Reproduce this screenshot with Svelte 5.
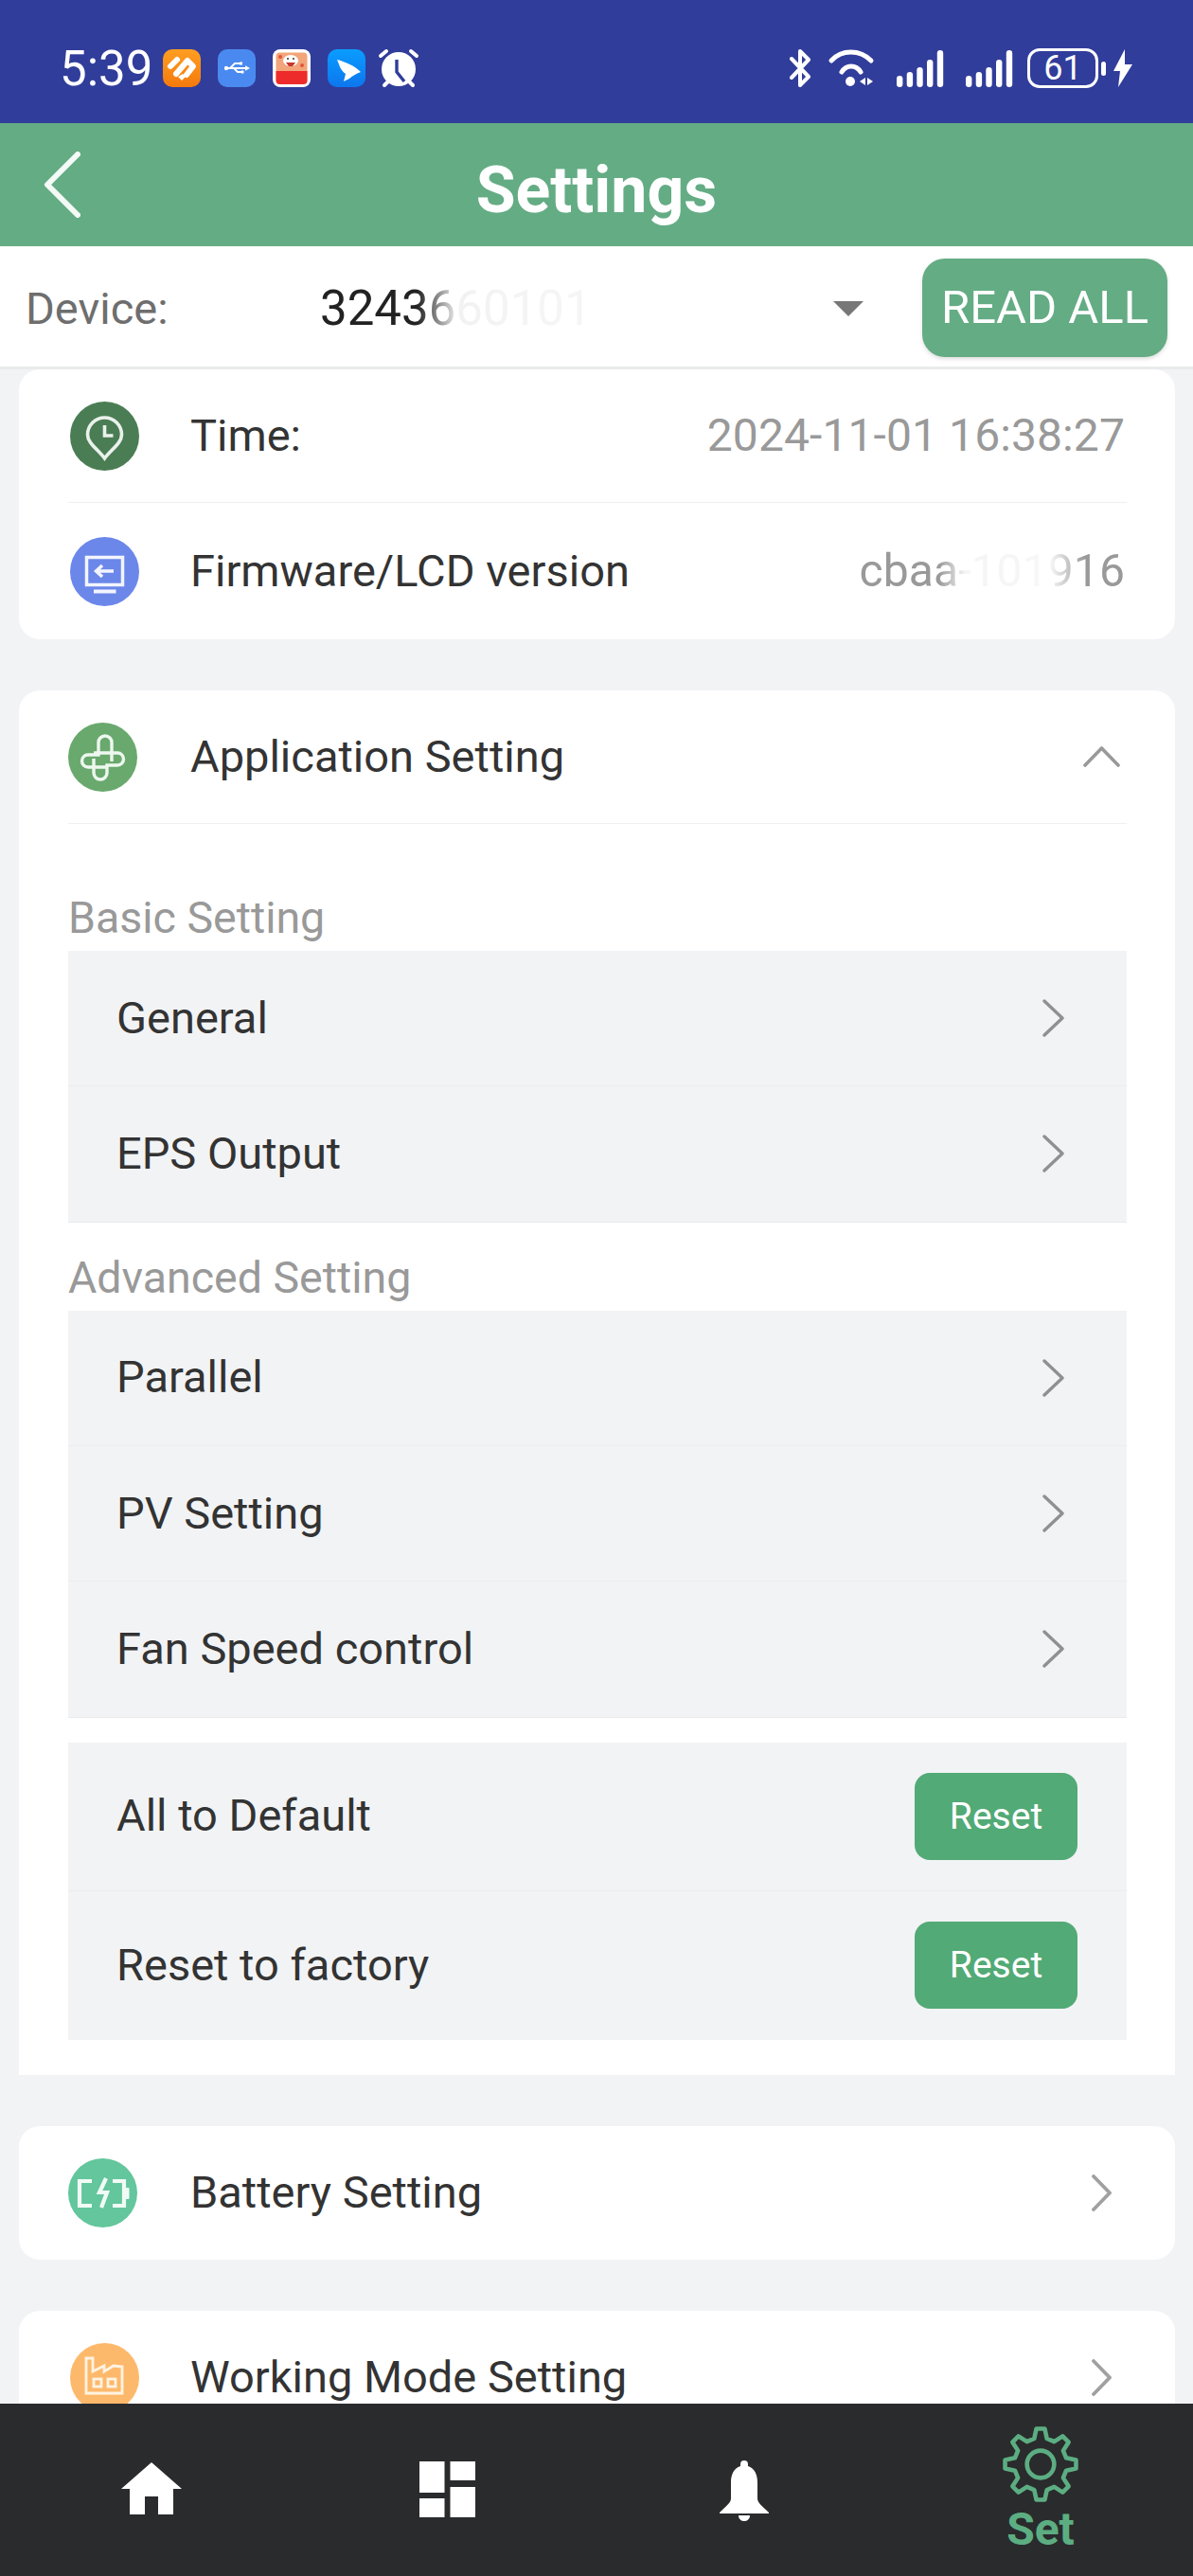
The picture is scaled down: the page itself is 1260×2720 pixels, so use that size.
<script>
  const gearPoints = (() => {
    const cx = 50, cy = 50, teeth = 8, ro = 46, ri = 34;
    const pts = [];
    for (let i = 0; i < teeth; i++) {
      const a = (i / teeth) * Math.PI * 2 - Math.PI / 2;
      const s = Math.PI / teeth;
      const p = (r, t) => `${(cx + r * Math.cos(t)).toFixed(2)},${(cy + r * Math.sin(t)).toFixed(2)}`;
      pts.push(p(ri, a - s * 0.62), p(ro, a - s * 0.3), p(ro, a + s * 0.3), p(ri, a + s * 0.62));
    }
    return pts.join(' ');
  })();
  const basic = ['General', 'EPS Output'];
  const advanced = ['Parallel', 'PV Setting', 'Fan Speed control'];
  const resets = ['All to Default', 'Reset to factory'];
  const bars = [[0, 12], [10.700, 16], [21.300, 21], [32, 29], [42.800, 39]];
</script>

<div class="app">
  <div class="status">
    <span class="clock">5:39</span>
    <div class="notifs">
      <svg class="n" viewBox="0 0 40 40"><defs><linearGradient id="o" x1="0" y1="0" x2="0" y2="1"><stop offset="0" stop-color="#ff9e22"/><stop offset="1" stop-color="#f47a0c"/></linearGradient></defs><rect width="40" height="40" rx="10" fill="url(#o)"/><g fill="none" stroke="#fff" stroke-width="6" stroke-linejoin="round" stroke-linecap="round"><path d="M8 18 15 11"/><path d="M14 26 26 12 32 18 25 27"/></g><path d="M16 29l4 4 4-4-3-3z" fill="#fff"/></svg>
      <svg class="n" viewBox="0 0 40 40"><rect width="40" height="40" rx="10" fill="#4a8af0"/><path d="M9 20h22M13 20l5-5h5M17 20l4 4h4" fill="none" stroke="#fff" stroke-width="1.800"/><circle cx="9" cy="20" r="2.200" fill="#fff"/><path d="M34 20l-5-2.800v5.600z" fill="#fff"/><rect x="23" y="13.500" width="3" height="3" fill="#fff"/><circle cx="26" cy="24" r="1.700" fill="#fff"/></svg>
      <svg class="n" viewBox="0 0 40 40"><rect width="40" height="40" rx="8" fill="#fff"/><rect x="3.500" y="3.500" width="33" height="33" rx="4" fill="#f2a57a"/><path d="M3.500 23h33v10a4 4 0 0 1-4 4h-25a4 4 0 0 1-4-4z" fill="#ee2b2b"/><ellipse cx="19" cy="12" rx="8" ry="6" fill="#fff"/><path d="M14 14h10l-3 4h-4z" fill="#c9362c"/><circle cx="16" cy="10" r="1" fill="#333"/><circle cx="22" cy="10" r="1" fill="#333"/><circle cx="8" cy="8" r="2" fill="#e0553a"/><circle cx="31" cy="17" r="2" fill="#e0553a"/></svg>
      <svg class="n" viewBox="0 0 40 40"><defs><linearGradient id="b" x1="0" y1="0" x2="0" y2="1"><stop offset="0" stop-color="#0a9dff"/><stop offset="1" stop-color="#0d76ee"/></linearGradient></defs><rect width="40" height="40" rx="10" fill="url(#b)"/><path d="M10 11C18 13 28 17 35 24 30 26 26 28 23 31L17 34 19 26C16 24 13 20 12 16z" fill="#fff"/></svg>
      <svg class="alarm" viewBox="0 0 42 40"><circle cx="21" cy="21" r="18" fill="#fff"/><path d="M19 11v13l8 10" fill="none" stroke="#313d9b" stroke-width="3.400"/><path d="M2 7 8 2M40 7 34 2" stroke="#fff" stroke-width="4" stroke-linecap="round"/><path d="M6 38l4-4M36 38l-4-4" stroke="#fff" stroke-width="4" stroke-linecap="round"/></svg>
    </div>
    <div class="sys">
      <svg class="bt" viewBox="0 0 25 40"><path d="M3 10 21 29 12 38V2L21 11 3 30" fill="none" stroke="#fff" stroke-width="4" stroke-linejoin="round" stroke-linecap="round"/></svg>
      <svg class="wifi" viewBox="0 0 51 40"><path d="M5 12C16 0 35 0 47 12" fill="none" stroke="#fff" stroke-width="5" stroke-linecap="round"/><path d="M16 24C21 16 31 16 36 24" fill="none" stroke="#fff" stroke-width="5" stroke-linecap="round"/><circle cx="25" cy="34" r="5" fill="#fff"/><path d="M41 30v8l-6-4zM43 30v8l6-4z" fill="#fff"/></svg>
      <svg class="sig" viewBox="0 0 50 40">{#each bars as [x, h]}<rect {x} y={40 - h} width="6.400" height={h} rx="3.200" fill="#fff"/>{/each}</svg>
      <svg class="sig s2" viewBox="0 0 50 40">{#each bars as [x, h]}<rect {x} y={40 - h} width="6.400" height={h} rx="3.200" fill="#fff"/>{/each}</svg>
      <div class="batt"><span>61</span></div>
      <span class="nub"></span>
      <svg class="bolt" viewBox="0 0 20 40"><path d="M12 0 0 23h7L5 40 20 16h-8z" fill="#fff"/></svg>
    </div>
  </div>

  <header class="top">
    <svg class="back" viewBox="0 0 39 70"><path d="M36 3 4 35l32 32" fill="none" stroke="#f4faf6" stroke-width="6" stroke-linecap="round" stroke-linejoin="round"/></svg>
    <h1>Settings</h1>
  </header>

  <div class="device">
    <span class="dlabel">Device:</span>
    <span class="dvalue">3243660101</span>
    <span class="tri"></span>
    <button class="readall">READ ALL</button>
  </div>

  <main class="content">
    <section class="card">
      <div class="row r1 line">
        <svg class="ico off" viewBox="0 0 73 73"><circle cx="36.500" cy="36.500" r="36.500" fill="#4b7d55"/><path d="M36.500 60 C30 51 18.500 44 18.500 35a18 18 0 0 1 36 0C54.500 44 43 51 36.500 60z" fill="none" stroke="#eaf2ec" stroke-width="3.600"/><path d="M36.500 25v11h9" fill="none" stroke="#eaf2ec" stroke-width="3.600"/></svg>
        <span class="name">Time:</span>
        <span class="val">2024-11-01 16:38:27</span>
      </div>
      <div class="row r2">
        <svg class="ico off" viewBox="0 0 73 73"><circle cx="36.500" cy="36.500" r="36.500" fill="#6c87ea"/><rect x="17.500" y="21.500" width="38" height="29" fill="none" stroke="#f2f5ff" stroke-width="3.500"/><path d="M25 55.500h23.500v4H25z" fill="#f2f5ff"/><path d="M46 36H28M34 30l-6.500 6 6.500 6" fill="none" stroke="#f2f5ff" stroke-width="3.500"/></svg>
        <span class="name">Firmware/LCD version</span>
        <span class="val fw">cbaa-101916</span>
      </div>
    </section>

    <section class="card app-card">
      <div class="row r1 line">
        <svg class="ico" viewBox="0 0 73 73"><circle cx="36.500" cy="36.500" r="36.500" fill="#69a96e"/><g fill="none" stroke="#eef7ef" stroke-width="3.400"><path d="M46 41V21a7 7 0 0 0-14 0v13H21a6.500 6.500 0 0 0 0 13h20"/><path d="M27 32h25a6.500 6.500 0 0 1 0 13H41v8a7 7 0 0 1-14 0V38"/></g></svg>
        <span class="name">Application Setting</span>
        <svg class="up" viewBox="0 0 39 22"><path d="M2 20 19.500 2 37 20" fill="none" stroke="#999" stroke-width="3.600" stroke-linecap="round" stroke-linejoin="round"/></svg>
      </div>

      <div class="label first">Basic Setting</div>
      <div class="panel">
        {#each basic as b}
          <div class="item"><span>{b}</span><svg class="chev" viewBox="0 0 25 40"><path d="M3 2 22 20 3 38" fill="none" stroke="#8f9090" stroke-width="3.400" stroke-linecap="round" stroke-linejoin="round"/></svg></div>
        {/each}
      </div>

      <div class="label">Advanced Setting</div>
      <div class="panel">
        {#each advanced as b}
          <div class="item"><span>{b}</span><svg class="chev" viewBox="0 0 25 40"><path d="M3 2 22 20 3 38" fill="none" stroke="#8f9090" stroke-width="3.400" stroke-linecap="round" stroke-linejoin="round"/></svg></div>
        {/each}
      </div>

      <div class="panel resets">
        {#each resets as r}
          <div class="item reset"><span>{r}</span><button class="rbtn">Reset</button></div>
        {/each}
      </div>
    </section>

    <section class="card">
      <div class="row r1">
        <svg class="ico" viewBox="0 0 73 73"><circle cx="36.500" cy="36.500" r="36.500" fill="#63c69c"/><g fill="none" stroke="#f1fbf6" stroke-width="4.200"><path d="M25 24H12v26h13"/><path d="M47 24h12v26H47"/><path d="M40 21l-7 15h8l-6 16"/></g><rect x="60" y="31" width="4.500" height="12" rx="1" fill="#f1fbf6"/></svg>
        <span class="name">Battery Setting</span>
        <svg class="right" viewBox="0 0 21 39"><path d="M2 2 19 19.500 2 37" fill="none" stroke="#a0a0a0" stroke-width="3.800" stroke-linecap="round" stroke-linejoin="round"/></svg>
      </div>
    </section>

    <section class="card">
      <div class="row r1">
        <svg class="ico off" viewBox="0 0 73 73"><circle cx="36.500" cy="36.500" r="36.500" fill="#fdb96b"/><g fill="none" stroke="#fff3e2" stroke-width="2.800"><path d="M17 16h7v14l12-6v6l10-6 9 1v28H17z"/><rect x="25" y="38" width="8" height="8"/><rect x="40" y="38" width="8" height="8"/></g></svg>
        <span class="name">Working Mode Setting</span>
        <svg class="right" viewBox="0 0 21 39"><path d="M2 2 19 19.500 2 37" fill="none" stroke="#a0a0a0" stroke-width="3.800" stroke-linecap="round" stroke-linejoin="round"/></svg>
      </div>
    </section>
  </main>

  <nav class="tabs">
    <div class="tab t1"><svg viewBox="0 0 64 55" width="64" height="55"><path d="M32 0 64 28H55V55H39V36H25V55H9V28H0z" fill="#fff"/></svg></div>
    <div class="tab t2"><svg viewBox="0 0 59 59" width="59" height="59"><path d="M0 0h26.500v33H0zM32.500 0H59v20H32.500zM0 39h26.500v20H0zM32.500 27H59v32H32.500z" fill="#fff"/></svg></div>
    <div class="tab t3"><svg viewBox="0 0 52 64" width="52" height="64"><path d="M26 0a4 4 0 0 1 4 4v2c7 2 10 9 10 17v17c0 5 5 8 12 15v1H0v-1c7-7 12-10 12-15V23c0-8 3-15 10-17V4a4 4 0 0 1 4-4z" fill="#fff"/><path d="M20 58h12c0 8-12 8-12 0z" fill="#fff"/></svg></div>
    <div class="tab t4">
      <svg viewBox="0 0 100 100" width="82" height="82"><polygon points={gearPoints} fill="none" stroke="#5cae82" stroke-width="5.600" stroke-linejoin="round"/><circle cx="50" cy="50" r="17.500" fill="none" stroke="#5cae82" stroke-width="5.600"/></svg>
      <span>Set</span>
    </div>
  </nav>
</div>

<style>
  :global(body) { margin: 0; background: #f2f3f5; }
  .app {
    width: 1260px; height: 2720px; overflow: hidden; display: flex; flex-direction: column;
    font-family: Roboto, "Noto Sans", sans-serif; background: #f2f3f5; color: #333;
  }
  .status {
    height: 130px; flex: none; background: #313d9b; color: #fff; display: flex; align-items: flex-start;
    padding: 52px 64px 0 63px; box-sizing: border-box;
  }
  .clock { font-size: 51px; line-height: 42px; width: 109px; }
  .notifs { display: flex; gap: 18px; }
  .n { width: 40px; height: 40px; display: block; }
  .alarm { width: 42px; height: 40px; display: block; margin-left: -4px; overflow: visible; }
  .sys { margin-left: auto; display: flex; align-items: flex-start; }
  .bt { width: 25px; height: 40px; display: block; margin-right: 15px; }
  .wifi { width: 51px; height: 40px; display: block; margin-right: 23px; }
  .sig { width: 50px; height: 40px; display: block; margin-right: 23px; }
  .sig.s2 { margin-right: 15px; }
  .batt {
    width: 75px; height: 42px; box-sizing: border-box; border: 3px solid #fff; border-radius: 13px; margin-top: -1px;
    display: flex; align-items: center; justify-content: center; font-size: 36px; line-height: 1;
  }
  .nub { width: 5px; height: 15px; background: #fff; border-radius: 3px; margin: 13px 8px 0 3px; }
  .bolt { width: 20px; height: 40px; display: block; }

  .top {
    height: 130px; flex: none; background: #64ac84; position: relative; display: flex; align-items: center; justify-content: center;
    padding-top: 11px; box-sizing: border-box;
  }
  .top h1 { margin: 0; font-size: 68px; font-weight: 700; color: #fff; line-height: 1; }
  .back { position: absolute; left: 46px; top: 30px; width: 39px; height: 70px; }

  .device {
    height: 127px; flex: none; background: #fff; display: flex; align-items: center;
    border-bottom: 3px solid #e9eaeb; padding: 0 27px 0 27px; position: relative;
  }
  .dlabel { width: 311px; font-size: 47px; color: #6e6e6e; position: relative; top: 2px; }
  .dvalue {
    font-size: 51px; color: #222; width: 539px; position: relative; top: 2px;
    -webkit-mask-image: linear-gradient(to right, #000 0, #000 19%, rgba(0,0,0,.06) 27%, rgba(0,0,0,.04) 54%, rgba(0,0,0,0) 58%);
    mask-image: linear-gradient(to right, #000 0, #000 19%, rgba(0,0,0,.06) 27%, rgba(0,0,0,.04) 54%, rgba(0,0,0,0) 58%);
  }
  .tri {
    width: 0; height: 0; border-left: 16px solid transparent; border-right: 16px solid transparent; border-top: 16px solid #777;
    position: absolute; left: 880px; top: 58px;
  }
  .readall {
    width: 259px; height: 104px; margin-left: auto; margin-top: 2px; border: 0; border-radius: 24px; background: #64ac84; color: #fff;
    font: 400 49px Roboto, sans-serif; padding: 0; box-shadow: 0 2px 4px rgba(0,0,0,.14);
  }

  .content { flex: 1; min-height: 0; overflow: hidden; padding: 0 19px 0 20px; display: flex; flex-direction: column; gap: 54px; }
  .card { background: #fff; border-radius: 22px; padding: 0 51px 0 52px; flex: none; }
  .app-card { border-radius: 22px 22px 0 0; padding-bottom: 37px; }
  .row { display: flex; align-items: center; box-sizing: border-box; }
  .r1 { height: 141px; }
  .r2 { height: 144px; }
  .line { border-bottom: 1.5px solid #eeeff0; }
  .ico { width: 73px; height: 73px; flex: none; display: block; }
  .ico.off { margin-left: 2px; margin-right: -2px; }
  .name { margin-left: 56px; font-size: 47px; color: #333; position: relative; top: -1px; }
  .val { margin-left: auto; margin-right: 2px; font-size: 48px; letter-spacing: 0.1px; color: #999; position: relative; top: -1px; }
  .fw {
    -webkit-mask-image: linear-gradient(to right, #000 0, #000 30%, rgba(0,0,0,.1) 40%, rgba(0,0,0,.08) 72%, #000 85%);
    mask-image: linear-gradient(to right, #000 0, #000 30%, rgba(0,0,0,.1) 40%, rgba(0,0,0,.08) 72%, #000 85%);
  }
  .up { width: 39px; height: 22px; margin-left: auto; margin-right: 7px; display: block; }
  .right { width: 21px; height: 39px; margin-left: auto; margin-right: 16px; display: block; }

  .label { height: 70px; line-height: 70px; padding-top: 23px; font-size: 46.500px; color: #999; }
  .label.first { padding-top: 64px; }
  .panel { background: #f2f3f5; }
  .resets { margin-top: 26px; }
  .item {
    height: 143.33px; box-sizing: border-box; display: flex; align-items: center; padding: 0 52px 0 51px; font-size: 47px; color: #333;
    border-bottom: 1.5px solid #eceded;
  }
  .item span { position: relative; top: -1px; }
  .item:last-child { border-bottom-color: #e9eaeb; }
  .chev { width: 25px; height: 40px; margin-left: auto; margin-right: 13px; display: block; }
  .reset { height: 157px; }
  .reset:last-child { border-bottom: 0; }
  .rbtn {
    width: 172px; height: 92px; margin-left: auto; border: 0; border-radius: 16px; background: #52aa76; color: #fff;
    font: 400 39px Roboto, sans-serif; padding: 0;
  }

  .tabs { height: 182px; flex: none; background: #2a2b2d; position: relative; }
  .tab { position: absolute; }
  .tab svg { display: block; }
  .t1 { left: 128px; top: 62px; }
  .t2 { left: 443px; top: 61px; }
  .t3 { left: 760px; top: 60px; }
  .t4 { left: 1058px; top: 23px; width: 82px; display: flex; flex-direction: column; align-items: center; }
  .t4 span { font-size: 48px; font-weight: 700; color: #5cae82; line-height: 46px; margin-top: 5px; }
</style>
